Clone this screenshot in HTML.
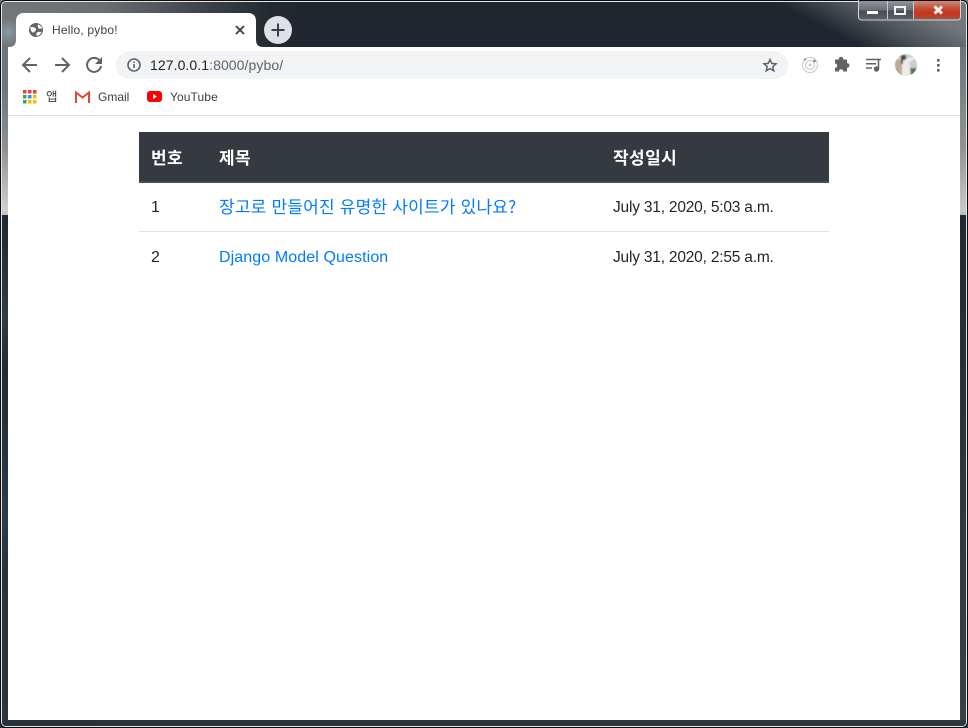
<!DOCTYPE html>
<html lang="ko"><head><meta charset="utf-8"><title>Hello, pybo!</title>
<style>
*{box-sizing:border-box}
html,body{margin:0;padding:0;width:968px;height:728px;overflow:hidden;background:#fff}
body{position:relative;font-family:"Liberation Sans","Noto Sans CJK KR",sans-serif}
.a{position:absolute;white-space:nowrap}
.t{font-size:16px;line-height:24px;color:#212529}
.l{color:#007bff}
.h{color:#fff;font-weight:700;font-size:17px;letter-spacing:.4px}
.k{font-family:"Noto Sans CJK KR",sans-serif}
.d{font-size:15.500px;letter-spacing:-.2px}
svg{position:absolute;display:block}
</style></head><body>
<div class="a" style="left:0;top:0;width:968px;height:728px;background:#fff"></div>
<svg style="left:0;top:0" width="968" height="728" viewBox="0 0 968 728">
<defs>
<linearGradient id="lf" x1="0" y1="0" x2="0" y2="1"><stop offset="0" stop-color="#6f7478"/><stop offset=".25" stop-color="#6a7880"/><stop offset=".6" stop-color="#8d9194"/><stop offset=".97" stop-color="#cfcfcf"/><stop offset="1" stop-color="#c0c0c0"/></linearGradient>
<linearGradient id="lb" x1="0" y1="0" x2="0" y2="1"><stop offset="0" stop-color="#1f2a33"/><stop offset=".2" stop-color="#2f3d47"/><stop offset=".3" stop-color="#212c35"/><stop offset=".6" stop-color="#2c3c4a"/><stop offset=".7" stop-color="#27333d"/><stop offset="1" stop-color="#2a3640"/></linearGradient>
<linearGradient id="rf" x1="0" y1="0" x2="0" y2="1"><stop offset="0" stop-color="#6d7377"/><stop offset=".6" stop-color="#8f9396"/><stop offset=".97" stop-color="#c8c8c8"/><stop offset="1" stop-color="#b5b5b5"/></linearGradient>
<linearGradient id="rb" x1="0" y1="0" x2="0" y2="1"><stop offset="0" stop-color="#1f2a33"/><stop offset="1" stop-color="#38434b"/></linearGradient>
<linearGradient id="top" gradientUnits="userSpaceOnUse" x1="0" y1="0" x2="300" y2="0"><stop offset="0" stop-color="#72777b"/><stop offset=".35" stop-color="#696e73"/><stop offset=".65" stop-color="#40474e"/><stop offset=".9" stop-color="#232a32"/><stop offset="1" stop-color="#1f262e"/></linearGradient>
<linearGradient id="topr" gradientUnits="userSpaceOnUse" x1="770" y1="0" x2="804" y2="-66"><stop offset="0" stop-color="#1f262e"/><stop offset=".4" stop-color="#4c5359"/><stop offset=".8" stop-color="#70767a"/><stop offset="1" stop-color="#74797d"/></linearGradient>
<linearGradient id="btn" x1="0" y1="0" x2="0" y2="1"><stop offset="0" stop-color="#90959a"/><stop offset=".5" stop-color="#6a7075"/><stop offset=".55" stop-color="#474d52"/><stop offset="1" stop-color="#5a6166"/></linearGradient>
<linearGradient id="cls" x1="0" y1="0" x2="0" y2="1"><stop offset="0" stop-color="#cf8a78"/><stop offset=".45" stop-color="#bb4b33"/><stop offset=".65" stop-color="#cb331a"/><stop offset="1" stop-color="#a8503c"/></linearGradient>
<linearGradient id="bot" x1="0" y1="0" x2="1" y2="0"><stop offset="0" stop-color="#28343d"/><stop offset="1" stop-color="#2c3841"/></linearGradient>
<radialGradient id="glow" gradientUnits="userSpaceOnUse" cx="8" cy="32" r="14"><stop offset="0" stop-color="#8898a4"/><stop offset="1" stop-color="#8898a4" stop-opacity="0"/></radialGradient>
<clipPath id="av"><circle cx="906" cy="65" r="11"/></clipPath>
<filter id="bl"><feGaussianBlur stdDeviation=".7"/></filter>
</defs>
<rect width="968" height="728" fill="#1f262e"/>
<rect x="0" y="0" width="300" height="47" fill="url(#top)"/>
<rect x="700" y="0" width="268" height="47" fill="url(#topr)"/>
<rect x="0" y="18" width="22" height="29" fill="url(#glow)"/>
<rect x="0" y="47" width="9" height="168" fill="url(#lf)"/>
<rect x="0" y="215" width="9" height="513" fill="url(#lb)"/>
<rect x="959" y="47" width="9" height="168" fill="url(#rf)"/>
<rect x="959" y="215" width="9" height="513" fill="url(#rb)"/>
<rect x="0" y="720" width="968" height="8" fill="url(#bot)"/>
<rect x="1.5" y="1.5" width="965" height="725" rx="4" fill="none" stroke="#e8e8e8" stroke-width="1"/>
<rect x=".5" y=".5" width="967" height="727" rx="5" fill="none" stroke="#0c0c0c" stroke-width="1"/>
<rect x="8" y="47" width="952" height="673" fill="#fff"/>
<!-- window buttons -->
<rect x="859" y="1" width="28" height="18" fill="url(#btn)"/>
<rect x="888" y="1" width="25" height="18" fill="url(#btn)"/>
<rect x="914" y="1" width="46" height="18" fill="url(#cls)"/>
<rect x="858.5" y="-3" width="102" height="23" rx="3" fill="none" stroke="#d0d3d6"/>
<path d="M887.500 1v18M913.500 1v18" stroke="#c8cbce"/>
<rect x="867" y="11" width="11" height="3" fill="#fff"/>
<rect x="895" y="7" width="10" height="7" fill="none" stroke="#f2f3f4" stroke-width="2"/>
<path d="M934.500 6.500l7.500 7M942 6.500l-7.500 7" stroke="#f4f0ee" stroke-width="3"/>
<!-- tab -->
<path d="M8 47c6 0 8-2 8-8V21c0-5 3-8 8-8h224c5 0 8 3 8 8v18c0 6 2 8 8 8z" fill="#fff"/>
<circle cx="36" cy="30" r="7" fill="#5f6368"/>
<path d="M30 27.500c2.500-1 5-.5 6 1.500.8 1.800-1.800 2-2 3.500-1.500.5-2.500-1-3-2zM38 24.500c2 .5 4 2.500 4.300 4l-3.300.3c-1-.8-1.700-2.800-1-4.300zM36.500 33c1.500-1.500 4-1.500 5-.8-.8 1.800-2.500 3.300-4.300 3.800-.8-1-1.200-2-.7-3z" fill="#fff"/>
<path d="M236 26l8 8M244 26l-8 8" stroke="#3c4043" stroke-width="1.900"/>
<circle cx="278" cy="30" r="14" fill="#dee1e6"/>
<path d="M278 23.500v13M271.500 30h13" stroke="#3c4043" stroke-width="2"/>
<!-- nav -->
<path d="M37 65H24M30 58l-7 7 7 7" fill="none" stroke="#5f6368" stroke-width="2"/>
<path d="M55 65h13M62 58l7 7-7 7" fill="none" stroke="#5f6368" stroke-width="2"/>
<path d="M99.500 60.500A7 7 0 1 0 101 66" fill="none" stroke="#5f6368" stroke-width="2"/>
<path d="M102 57v7h-7z" fill="#5f6368"/>
<rect x="116" y="51" width="672" height="28" rx="14" fill="#f1f3f4"/>
<circle cx="134" cy="65" r="6" fill="none" stroke="#5f6368" stroke-width="1.600"/>
<path d="M134 64v4M134 61.500v1.500" stroke="#5f6368" stroke-width="1.600"/>
<path d="M770 59.500l1.700 3.900 4.300.4-3.200 2.800 1 4.200-3.800-2.200-3.800 2.200 1-4.200-3.200-2.800 4.300-.4z" fill="none" stroke="#5f6368" stroke-width="1.500"/>
<circle cx="810" cy="65" r="7.500" fill="#fff" stroke="#cfcfcf" stroke-width="1.200"/>
<circle cx="810" cy="65" r="4.500" fill="none" stroke="#cccccc" stroke-width="1.200"/>
<circle cx="810" cy="65" r="1.500" fill="#c8c8c8"/>
<circle cx="805" cy="59.500" r="1.200" fill="#999"/>
<circle cx="814.500" cy="61" r="1.200" fill="#777"/>
<path d="M835 61h3.800c-.5-3.500 5-3.500 4.500 0h3.700v3.700c3.300-.5 3.300 5 0 4.500V73h-3.800c.5-2.800-4.700-2.800-4.200 0h-4v-3.800c2.800.5 2.800-4.700 0-4.200z" fill="#5f6368" transform="translate(0 -1.500)"/>
<path d="M866 59.500h13M866 63.800h10M866 68h6" stroke="#5f6368" stroke-width="1.500"/>
<circle cx="876.500" cy="69" r="2.700" fill="#5f6368"/>
<path d="M878.500 69V59.500h2.500" fill="none" stroke="#5f6368" stroke-width="1.500"/>
<g clip-path="url(#av)"><g filter="url(#bl)">
<rect x="894" y="53" width="24" height="24" fill="#c5d3d0"/>
<rect x="894" y="60" width="8" height="17" fill="#b9ac94"/>
<path d="M908 68h10v9h-10z" fill="#61744f"/>
<path d="M902 60l3-1 11-3 1 2-8 4 1 6 1 9h-9z" fill="#eeece6"/>
<circle cx="903.500" cy="57.500" r="2.800" fill="#55423a"/>
<rect x="901" y="58" width="2" height="6" fill="#55423a"/>
</g></g>
<rect x="937" y="59" width="2.600" height="2.600" fill="#5f6368"/><rect x="937" y="64" width="2.600" height="2.600" fill="#5f6368"/><rect x="937" y="69" width="2.600" height="2.600" fill="#5f6368"/>
<!-- bookmarks -->
<g>
<rect x="23" y="90" width="3.500" height="3.500" fill="#ea4335"/><rect x="28" y="90" width="3.500" height="3.500" fill="#ea4335"/><rect x="33" y="90" width="3.500" height="3.500" fill="#ea4335"/>
<rect x="23" y="95" width="3.500" height="3.500" fill="#34a853"/><rect x="28" y="95" width="3.500" height="3.500" fill="#4285f4"/><rect x="33" y="95" width="3.500" height="3.500" fill="#fbbc04"/>
<rect x="23" y="100" width="3.500" height="3.500" fill="#34a853"/><rect x="28" y="100" width="3.500" height="3.500" fill="#fbbc04"/><rect x="33" y="100" width="3.500" height="3.500" fill="#fbbc04"/>
</g>
<path d="M76 103V92.500l6.500 5 6.500-5V103" fill="none" stroke="#d9493c" stroke-width="2"/>
<rect x="147" y="91" width="15" height="11" rx="3" fill="#f00"/>
<path d="M153 94l4 2.500-4 2.500z" fill="#fff"/>
<rect x="8" y="115" width="952" height="1" fill="#dadce0"/>
<!-- table -->
<rect x="139" y="132" width="690" height="50" fill="#343a40"/>
<rect x="139" y="181" width="690" height="2" fill="#454d55"/>
<rect x="139" y="231" width="690" height="1" fill="#dee2e6"/>
</svg>
<div class="a" style="left:52px;top:21px;font-size:12px;line-height:18px;color:#3c4043;letter-spacing:.2px">Hello, pybo!</div>
<div class="a" style="left:150px;top:55px;font-size:14px;line-height:20px;color:#5f6368;letter-spacing:.08px"><span style="color:#202124">127.0.0.1</span>:8000/pybo/</div>
<div class="a k" style="left:46px;top:87px;font-size:12.500px;line-height:18px;color:#3c4043">앱</div>
<div class="a" style="left:98px;top:88px;font-size:12px;line-height:18px;color:#3c4043">Gmail</div>
<div class="a" style="left:170px;top:88px;font-size:12px;line-height:18px;color:#3c4043;letter-spacing:.1px">YouTube</div>
<div class="a t h k" style="left:151px;top:145px">번호</div>
<div class="a t h k" style="left:219px;top:145px">제목</div>
<div class="a t h k" style="left:613px;top:145px">작성일시</div>
<div class="a t" style="left:151px;top:196px">1</div>
<div class="a t l k" style="left:219px;top:194px;font-size:17px;letter-spacing:.2px">장고로 만들어진 유명한 사이트가 있나요?</div>
<div class="a t d" style="left:613px;top:196px">July 31, 2020, 5:03 a.m.</div>
<div class="a t" style="left:151px;top:246px">2</div>
<div class="a t l" style="left:219px;top:246px;letter-spacing:.1px">Django Model Question</div>
<div class="a t d" style="left:613px;top:246px">July 31, 2020, 2:55 a.m.</div>
</body></html>
